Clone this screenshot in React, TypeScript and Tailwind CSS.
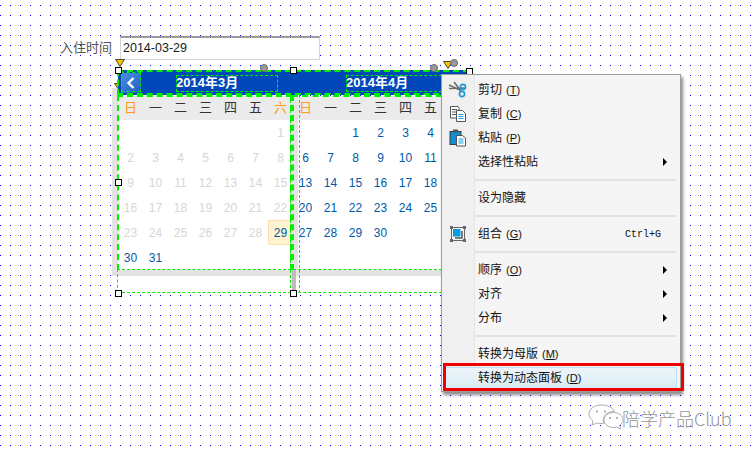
import React from "react";

const SANS = "font-['Liberation_Sans','Noto_Sans_CJK_SC',sans-serif]";

function Handle({ x, y }: { x: number; y: number }) {
  return (
    <div
      className="absolute w-[7px] h-[7px] bg-white border border-black"
      style={{ left: x - 3, top: y - 3 }}
    />
  );
}

function Dot({ x, y }: { x: number; y: number }) {
  return (
    <div
      className="absolute w-[8px] h-[8px] rounded-full bg-[#9a9a9a] border border-[#6b6b6b]"
      style={{ left: x - 4, top: y - 4 }}
    />
  );
}

function Tri({ x, y }: { x: number; y: number }) {
  return (
    <svg className="absolute" style={{ left: x - 5, top: y - 4 }} width="10" height="8" viewBox="0 0 10 8">
      <path d="M0.5 0.5H9.5L5 7.500Z" fill="#f5c400" stroke="#4a4a2a" />
    </svg>
  );
}

const WEEK = ["日", "一", "二", "三", "四", "五", "六"];

function Month({ offset, days, active, selected }: { offset: number; days: number; active: (d: number) => boolean; selected?: number }) {
  const cells: (number | null)[] = [];
  for (let i = 0; i < offset; i++) cells.push(null);
  for (let d = 1; d <= days; d++) cells.push(d);
  return (
    <div className="w-[175px] shrink-0">
      <div className="grid grid-cols-[repeat(7,25px)] h-[24px] bg-[#ebebeb] items-center text-center text-[13px]">
        {WEEK.map((w, i) => (
          <span key={w} className={i === 0 || i === 6 ? "text-[#ff9a14]" : "text-[#333333]"}>
            {w}
          </span>
        ))}
      </div>
      <div className="grid grid-cols-[repeat(7,25px)] auto-rows-[25px] h-[150px] bg-white text-[12px] text-center">
        {cells.map((d, i) => (
          <div
            key={i}
            className={
              "flex items-center justify-center " +
              (d !== null && d === selected
                ? "bg-[#fff3d2] border border-[#fbe0ad] text-[#0059a9]"
                : d !== null && active(d)
                  ? "text-[#0059a9]"
                  : "text-[#d6d6d6]")
            }
          >
            {d}
          </div>
        ))}
      </div>
      <div className="h-[6px] bg-[#e3e3e3]" />
      <div className="h-[17px] bg-white" />
    </div>
  );
}

function Mn({ c }: { c: string }) {
  return (
    <span className="ml-[4px] font-['Liberation_Sans',sans-serif] text-[11px]">
      (<span className="underline">{c}</span>)
    </span>
  );
}

function Arrow() {
  return <div className="ml-auto mr-[13px] w-0 h-0 border-y-[4px] border-y-transparent border-l-[4px] border-l-black" />;
}

function Row({ label, mn, icon, right, arrow, hi }: { label: string; mn?: string; icon?: React.ReactNode; right?: string; arrow?: boolean; hi?: boolean }) {
  return (
    <div className="flex h-[24px] items-center relative">
      <div className="w-[32px] shrink-0 flex items-center justify-center">{icon}</div>
      <div className="flex items-center flex-1 pl-[4px] text-[12px] text-[#111111]">
        <span>{label}</span>
        {mn && <Mn c={mn} />}
        {right && <span className="ml-auto mr-[19px] font-['Liberation_Mono',monospace] text-[10px]">{right}</span>}
        {arrow && <Arrow />}
      </div>
      {hi && <div className="absolute inset-x-[3px] inset-y-px rounded-[2px] border border-[#b9e0f2] bg-[linear-gradient(#eef5fa,#d8ecf6)] -z-10" />}
    </div>
  );
}

function Sep() {
  return (
    <div className="flex h-[12px] items-center">
      <div className="w-[32px] shrink-0" />
      <div className="flex-1 h-[2px] bg-[#e2e2e2] mr-[4px]" />
    </div>
  );
}

const Scissors = (
  <svg width="20" height="20" viewBox="0 0 20 20" fill="none">
    <path d="M1 8.500 L18 8 M6 2 L13 11" stroke="#6b6b6b" strokeWidth="1.6" />
    <path d="M1 5 L12 10" stroke="#6b6b6b" strokeWidth="1.4" />
    <circle cx="15" cy="7" r="2.600" stroke="#1e9ad6" strokeWidth="1.6" />
    <circle cx="14" cy="14" r="2.600" stroke="#1e9ad6" strokeWidth="1.6" />
  </svg>
);

const Copy = (
  <svg width="18" height="18" viewBox="0 0 18 18" fill="none">
    <path d="M1.500 1.500H9L10 3V13H1.500Z" fill="#fff" stroke="#555" />
    <path d="M3 4.500H8M3 7H8M3 9.500H8" stroke="#555" />
    <path d="M7.500 5.500H13.500L16.500 8.500V16.500H7.500Z" fill="#fff" stroke="#555" />
    <path d="M9.500 9.500H14.500M9.500 11.500H14.500M9.500 13.500H14.500" stroke="#1e9ad6" />
  </svg>
);

const Paste = (
  <svg width="18" height="18" viewBox="0 0 18 18" fill="none">
    <rect x="1" y="2.500" width="11" height="13" fill="#0f8fd6" stroke="#3c3c3c" />
    <rect x="4" y="0.500" width="5" height="3" fill="#555" />
    <path d="M7.500 6.500H13.500L16.500 9V17H7.500Z" fill="#fff" stroke="#555" />
    <path d="M9.500 10H14.500M9.500 12H14.500M9.500 14H14.500" stroke="#1e9ad6" />
  </svg>
);

const Group = (
  <svg width="16" height="16" viewBox="0 0 16 16" fill="none">
    <rect x="1.500" y="1.500" width="13" height="13" stroke="#666" fill="#f5f5f5" />
    <rect x="3" y="3" width="7.500" height="7.500" fill="#0a9be0" />
    <path d="M12 5V12H5" stroke="#555" strokeWidth="1.5" />
    <path d="M0 0H3V3H0ZM13 0H16V3H13ZM0 13H3V16H0ZM13 13H16V16H13Z" fill="#666" />
  </svg>
);

const Wechat = (
  <svg width="36" height="28" viewBox="0 0 36 28" fill="#ffffff" stroke="#adadad" strokeWidth="1">
    <path d="M13 1C6 1 1 5 1 10c0 3 2 5 4 7l-1 4 5-2c1 .3 2 .5 4 .5 1 0 2 0 3-.3-.5-1-.8-2-.8-3.200 0-5 5-8.500 11-8.500C25 3.500 20 1 13 1Z" />
    <path d="M35 16c0-4.500-4.500-7.500-9.500-7.500S16 11.500 16 16s4.500 7.500 9.500 7.500c1.200 0 2-.2 3-.5l4 2-1-3.500c2-1.500 3.500-3.300 3.500-5.500Z" />
    <circle cx="9" cy="7.500" r="1" fill="#9a9a9a" stroke="none" />
    <circle cx="17" cy="7.500" r="1" fill="#9a9a9a" stroke="none" />
    <circle cx="22" cy="14" r="1" fill="#9a9a9a" stroke="none" />
    <circle cx="29" cy="14" r="1" fill="#9a9a9a" stroke="none" />
  </svg>
);

function ContextMenu() {
  return (
    <div className="absolute left-[441px] top-[74px] w-[240px] h-[318px] z-20 isolate border border-[#9c9c9c] bg-[#f5f5f5] pt-[3px] shadow-[2px_3px_3px_rgba(0,0,0,0.45)]">
      <div className="absolute left-[32px] top-0 bottom-0 w-px bg-[#e6e6e6] -z-20" />
      <div className="absolute left-0 top-0 bottom-0 w-[32px] bg-[#f0f0f0] -z-20" />
      <Row label="剪切" mn="T" icon={Scissors} />
      <Row label="复制" mn="C" icon={Copy} />
      <Row label="粘贴" mn="P" icon={Paste} />
      <Row label="选择性粘贴" arrow />
      <Sep />
      <Row label="设为隐藏" />
      <Sep />
      <Row label="组合" mn="G" icon={Group} right="Ctrl+G" />
      <Sep />
      <Row label="顺序" mn="O" arrow />
      <Row label="对齐" arrow />
      <Row label="分布" arrow />
      <Sep />
      <Row label="转换为母版" mn="M" />
      <Row label="转换为动态面板" mn="D" hi />
    </div>
  );
}

export default function App() {
  return (
    <div
      className={
        "relative w-[755px] h-[450px] overflow-hidden bg-white " +
        SANS +
        " bg-[conic-gradient(at_1px_1px,transparent_270deg,#0000ff_270deg)] bg-[length:10px_10px] bg-[position:0_5px]"
      }
    >
      {/* form field */}
      <div className="absolute left-[60px] top-[36px] flex items-center gap-[8px] h-[24px]">
        <span className="text-[13px] text-[#555555]">入住时间</span>
        <div className="w-[200px] h-[24px] bg-white border border-[#d4d4d4] border-t-[#9a9a9a] border-t-2 pl-[2px] flex items-center text-[12.5px] text-[#1a1a1a]">
          2014-03-29
        </div>
      </div>

      <Tri x={119} y={87} />

      {/* date picker widget */}
      <div className="absolute left-[112px] top-[70px] w-[356px] h-[223px] flex">
        <div className="w-[6px] h-[188px] mt-[18px] bg-[#e3e3e3] shrink-0" />
        <div className="flex flex-col flex-1">
          <div className="h-[25px] bg-[#0048ba] flex items-center shrink-0 text-[13px] font-bold text-white">
            <div className="ml-[3px] w-[20px] h-[20px] bg-[linear-gradient(135deg,#4c8fe0,#1c5fc0)] flex items-center justify-center">
              <svg width="10" height="12" viewBox="0 0 10 12" fill="none">
                <path d="M7.500 1 L2.500 6 L7.500 11" stroke="#ffffff" strokeWidth="2.4" />
              </svg>
            </div>
            <span className="ml-[35px] w-[101px]">2014年3月</span>
            <span className="ml-[69px]">2014年4月</span>
          </div>
          <div className="flex mt-px">
            <Month offset={6} days={31} active={(d) => d >= 30} selected={29} />
            <Month offset={2} days={30} active={() => true} />
          </div>
        </div>
      </div>

      {/* vertical strip between the months */}
      <div className="absolute left-[290px] top-[96px] w-[8px] h-[180px] bg-[#e3e3e3]" />
      <div className="absolute left-[292px] top-[270px] w-[4px] h-[23px] bg-[#bdbdbd]" />

      {/* selection outlines */}
      <div className="absolute left-[117px] top-[70px] w-[352px] h-[25px] border-2 border-dashed border-[#00f000]" />
      <div className="absolute left-[121px] top-[72px] w-[20px] h-[20px] border border-dashed border-[#00f000]" />
      <div className="absolute left-[176px] top-[75px] w-[102px] h-[17px] border border-dashed border-[#00f000]" />
      <div className="absolute left-[346px] top-[75px] w-[96px] h-[17px] border border-dashed border-[#00f000]" />
      <div className="absolute left-[117px] top-[95px] w-[175px] h-[175px] border-2 border-b-0 border-dashed border-[#00f000]" />
      <div className="absolute left-[292px] top-[95px] w-[150px] h-[175px] border-l-2 border-t-2 border-dashed border-[#00f000]" />
      <div className="absolute left-[117px] top-[269px] w-[325px] h-[24px] border border-r-0 border-dashed border-[#00f000]" />
      <div className="absolute left-[290px] top-[95px] w-px h-[198px] border-l border-dashed border-[#00f000]" />
      <div className="absolute left-[299px] top-[95px] w-px h-[198px] border-l border-dashed border-[#00f000]" />

      <Tri x={120} y={63} />
      <Tri x={448} y={65} />
      <Dot x={264} y={68} />
      <Dot x={434} y={68} />
      <Dot x={454} y={63} />
      <Handle x={118} y={70} />
      <Handle x={293} y={70} />
      <Handle x={469} y={71} />
      <Handle x={118} y={182} />
      <Handle x={118} y={293} />
      <Handle x={293} y={293} />

      <ContextMenu />

      {/* red annotation */}
      <div className="absolute left-[443px] top-[363px] w-[241px] h-[28px] border-[3px] border-[#f00000] z-30" />

      {/* watermark */}
      <div className="absolute left-[588px] top-[404px] flex items-center h-[28px]">
        <div className="w-[34px] shrink-0">{Wechat}</div>
        <span className="text-[18px] text-[#969696] font-light [text-shadow:0_0_2px_#ffffff,0_0_2px_#ffffff] font-['Noto_Sans_CJK_SC',sans-serif] leading-none">
          陪学产品Club
        </span>
      </div>
    </div>
  );
}
